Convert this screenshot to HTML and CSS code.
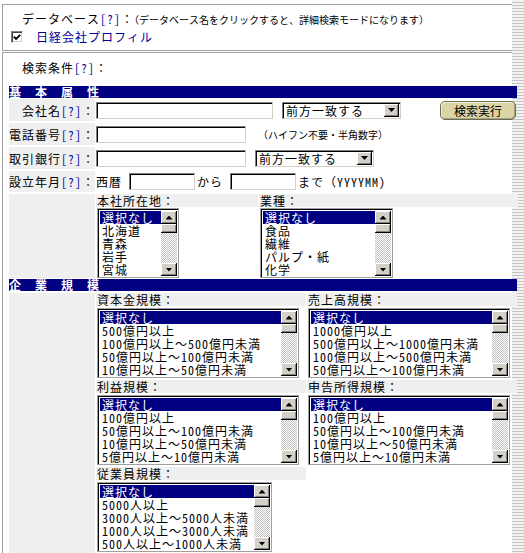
FILE: index.html
```html
<!DOCTYPE html>
<html lang="ja">
<head>
<meta charset="UTF-8" />
<title>検索条件</title>
<link rel="stylesheet" href="styles.css">
</head>
<body>

<div class="frame frame-db">
  <div class="db-title">データベース<a class="help" href="#">[?]</a>：<span class="note">（データベース名をクリックすると、詳細検索モードになります）</span></div>
  <div class="db-item">
    <span class="check"><svg width="11" height="11" viewBox="0 0 11 11"><polyline points="2,4.5 4.5,7 9,2.5" fill="none" stroke="#000" stroke-width="2"/></svg></span>
    <a class="db-link" href="#">日経会社プロフィル</a>
  </div>
</div>

<div class="frame frame-search">
  <div class="cond-title">検索条件<a class="help" href="#">[?]</a>：</div>

  <div class="bar">基　本　属　性</div>
  <div class="basic">
    <div class="label">会社名<a class="help" href="#">[?]</a>：</div>
    <div class="field">
      <input class="text w-name" type="text">
      <div class="select gap-name"><span>前方一致する</span><i class="drop"></i></div>
      <button class="run" type="button">検索実行</button>
    </div>

    <div class="label">電話番号<a class="help" href="#">[?]</a>：</div>
    <div class="field">
      <input class="text w-tel" type="text">
      <span class="note hint">（ハイフン不要・半角数字）</span>
    </div>

    <div class="label">取引銀行<a class="help" href="#">[?]</a>：</div>
    <div class="field">
      <input class="text w-tel" type="text">
      <div class="select gap-bank"><span>前方一致する</span><i class="drop"></i></div>
    </div>

    <div class="label">設立年月<a class="help" href="#">[?]</a>：</div>
    <div class="field">
      西暦<input class="text w-year" type="text">から<input class="text w-year" type="text">まで（YYYYMM)
    </div>

    <div class="label"></div>
    <div class="pick pick-basic">
      <div class="cell">
        <div class="cell-label">本社所在地：</div>
        <div class="listbox lb-pref">
          <ul class="lb-items">
            <li class="sel">選択なし</li>
            <li>北海道</li>
            <li>青森</li>
            <li>岩手</li>
            <li>宮城</li>
          </ul>
          <div class="lb-scroll"><span class="lb-btn up"></span><span class="lb-thumb"></span><span class="lb-track"></span><span class="lb-btn down"></span></div>
        </div>
      </div>
      <div class="cell">
        <div class="cell-label">業種：</div>
        <div class="listbox lb-ind">
          <ul class="lb-items">
            <li class="sel">選択なし</li>
            <li>食品</li>
            <li>繊維</li>
            <li>パルプ・紙</li>
            <li>化学</li>
          </ul>
          <div class="lb-scroll"><span class="lb-btn up"></span><span class="lb-thumb"></span><span class="lb-track"></span><span class="lb-btn down"></span></div>
        </div>
      </div>
    </div>
  </div>

  <div class="bar">企　業　規　模</div>
  <div class="scale">
    <div class="label"></div>
    <div class="pick pick-scale">
      <div class="cell">
        <div class="cell-label">資本金規模：</div>
        <div class="listbox lb-wide">
          <ul class="lb-items">
            <li class="sel">選択なし</li>
            <li>500億円以上</li>
            <li>100億円以上～500億円未満</li>
            <li>50億円以上～100億円未満</li>
            <li>10億円以上～50億円未満</li>
          </ul>
          <div class="lb-scroll"><span class="lb-btn up"></span><span class="lb-thumb"></span><span class="lb-track"></span><span class="lb-btn down"></span></div>
        </div>
      </div>
      <div class="cell">
        <div class="cell-label">売上高規模：</div>
        <div class="listbox lb-wide">
          <ul class="lb-items">
            <li class="sel">選択なし</li>
            <li>1000億円以上</li>
            <li>500億円以上～1000億円未満</li>
            <li>100億円以上～500億円未満</li>
            <li>50億円以上～100億円未満</li>
          </ul>
          <div class="lb-scroll"><span class="lb-btn up"></span><span class="lb-thumb"></span><span class="lb-track"></span><span class="lb-btn down"></span></div>
        </div>
      </div>
      <div class="cell">
        <div class="cell-label">利益規模：</div>
        <div class="listbox lb-wide">
          <ul class="lb-items">
            <li class="sel">選択なし</li>
            <li>100億円以上</li>
            <li>50億円以上～100億円未満</li>
            <li>10億円以上～50億円未満</li>
            <li>5億円以上～10億円未満</li>
          </ul>
          <div class="lb-scroll"><span class="lb-btn up"></span><span class="lb-thumb"></span><span class="lb-track"></span><span class="lb-btn down"></span></div>
        </div>
      </div>
      <div class="cell">
        <div class="cell-label">申告所得規模：</div>
        <div class="listbox lb-wide">
          <ul class="lb-items">
            <li class="sel">選択なし</li>
            <li>100億円以上</li>
            <li>50億円以上～100億円未満</li>
            <li>10億円以上～50億円未満</li>
            <li>5億円以上～10億円未満</li>
          </ul>
          <div class="lb-scroll"><span class="lb-btn up"></span><span class="lb-thumb"></span><span class="lb-track"></span><span class="lb-btn down"></span></div>
        </div>
      </div>
      <div class="cell">
        <div class="cell-label">従業員規模：</div>
        <div class="listbox lb-emp">
          <ul class="lb-items">
            <li class="sel">選択なし</li>
            <li>5000人以上</li>
            <li>3000人以上～5000人未満</li>
            <li>1000人以上～3000人未満</li>
            <li>500人以上～1000人未満</li>
          </ul>
          <div class="lb-scroll"><span class="lb-btn up"></span><span class="lb-thumb"></span><span class="lb-track"></span><span class="lb-btn down"></span></div>
        </div>
      </div>
    </div>
  </div>
</div>

</body>
</html>
```

FILE: styles.css
```css
html {
  background: #fff repeating-linear-gradient(to bottom, #f2f2f2 0 2px, #c4c4c4 2px 3px) right top / 12px 100% no-repeat;
}
body {
  margin: 0;
  font-family: "Noto Sans Mono CJK JP", "Noto Sans CJK JP", sans-serif;
  font-size: 12px;
  letter-spacing: 1px;
  line-height: 13px;
  color: #000;
}
a {
  text-decoration: none;
}
.help {
  color: #000099;
}

/* frames */
.frame {
  box-sizing: border-box;
  width: 510px;
  margin-left: 2px;
  border-top: 1px solid #a0a0a0;
  border-left: 1px solid #a0a0a0;
}
.frame-db {
  margin-top: 4px;
  height: 47px;
  border-bottom: 1px solid #a0a0a0;
  padding: 7px 0 0 8px;
}
.frame-search {
  margin-top: 1px;
  padding: 8px 0 20px 6px;
}
.db-title {
  margin-left: 11px;
  white-space: nowrap;
}
.note {
  font-size: 10px;
  letter-spacing: 0;
}
.db-item {
  display: flex;
  align-items: center;
  margin-top: 4px;
  height: 13px;
}
.check {
  display: flex;
  box-sizing: border-box;
  width: 12px;
  height: 12px;
  margin-right: 13px;
  background: #fff;
  border: 1px solid;
  border-color: #808080 #fff #fff #808080;
  box-shadow: inset 1px 1px #404040, inset -1px -1px #d4d0c8;
}
.db-link {
  color: #000099;
}
.cond-title {
  margin-left: 13px;
}

/* section bars */
.bar {
  width: 508px;
  height: 12px;
  line-height: 12px;
  margin-top: 12px;
  background: #000080;
  color: #fff;
  font-weight: bold;
  white-space: nowrap;
}
.basic + .bar {
  margin-top: 1px;
}
.basic, .scale {
  display: grid;
  grid-template-columns: 86px 421px;
  column-gap: 1px;
  row-gap: 2px;
  margin-top: 1px;
  grid-template-rows: 22px 22px 22px 21px auto;
}
.scale {
  grid-template-rows: auto;
  margin-top: 2px;
}
.label {
  display: flex;
  align-items: center;
  justify-content: flex-end;
  background: #efefef;
  white-space: nowrap;
}
.field {
  display: flex;
  align-items: center;
  white-space: nowrap;
}

/* inputs */
.text {
  box-sizing: border-box;
  height: 17px;
  padding: 0;
  margin: 0;
  background: #fff;
  border: 1px solid;
  border-color: #808080 #d4d0c8 #d4d0c8 #808080;
  box-shadow: inset 1px 1px #000;
  font: inherit;
}
.w-name {
  width: 177px;
}
.w-tel {
  width: 150px;
}
.w-year {
  width: 66px;
  margin: 0 2px 0 7px;
}
.hint {
  margin-left: 12px;
}
.select {
  display: flex;
  align-items: center;
  box-sizing: border-box;
  width: 119px;
  height: 17px;
  padding: 0 1px 0 3px;
  border: 1px solid;
  border-color: #808080 #d4d0c8 #d4d0c8 #808080;
  box-shadow: inset 1px 1px #000;
  background: #fff;
}
.select span {
  flex: 1;
}
.gap-name {
  margin-left: 9px;
}
.gap-bank {
  margin-left: 9px;
}
.drop, .lb-btn {
  display: flex;
  align-items: center;
  justify-content: center;
  box-sizing: border-box;
  background: #d4d0c8;
  box-shadow: inset -1px -1px #000, inset 1px 1px #fff, inset -2px -2px #808080;
}
.drop {
  width: 15px;
  height: 13px;
}
.drop::after, .lb-btn::after {
  content: "";
  width: 7px;
  height: 4px;
  background: #000;
  clip-path: polygon(0 0, 100% 0, 50% 100%);
}
.run {
  margin-left: auto;
  margin-right: 1px;
  width: 76px;
  height: 19px;
  padding: 0;
  font: inherit;
  color: #000;
  background: #d9d5a6;
  border: 1px solid #6b6b55;
  border-radius: 5px;
  box-shadow: inset 1px 1px #f5f3dc, inset -1px -1px #a8a47a;
}

/* list pickers */
.pick {
  display: grid;
  align-content: start;
}
.pick-basic {
  grid-template-columns: 162px 259px;
  column-gap: 1px;
}
.pick-scale {
  grid-template-columns: 210px 210px;
  column-gap: 1px;
  row-gap: 2px;
  padding-bottom: 8px;
}
.cell-label {
  height: 13px;
  background: #efefef;
  padding-left: 1px;
  white-space: nowrap;
}
.listbox {
  display: flex;
  box-sizing: border-box;
  height: 70px;
  margin: 1px 0 0 1px;
  padding: 2px 1px 1px 2px;
  background: #fff;
  border: 1px solid #a0a0a0;
  box-shadow: inset 1px 1px #000;
}
.pick-scale .listbox {
  margin-top: 2px;
}
.lb-pref {
  width: 82px;
}
.lb-ind {
  width: 133px;
}
.lb-wide {
  width: 202px;
}
.lb-emp {
  width: 175px;
}
.lb-items {
  flex: 1;
  margin: 0;
  padding: 0;
  list-style: none;
  white-space: nowrap;
}
.lb-items li {
  height: 13px;
  line-height: 13px;
  padding-left: 2px;
}
.lb-items .sel {
  background: #000080;
  color: #fff;
}
.lb-scroll {
  display: flex;
  flex-direction: column;
  width: 16px;
}
.lb-btn {
  height: 13px;
}
.lb-btn.up::after {
  clip-path: polygon(50% 0, 100% 100%, 0 100%);
}
.lb-thumb {
  height: 9px;
  background: #d4d0c8;
  box-shadow: inset -1px -1px #000, inset 1px 1px #fff, inset -2px -2px #808080;
}
.lb-track {
  flex: 1;
  background: repeating-conic-gradient(#c0c0c0 0 25%, #fff 0 50%) 0 0 / 2px 2px;
}
```
